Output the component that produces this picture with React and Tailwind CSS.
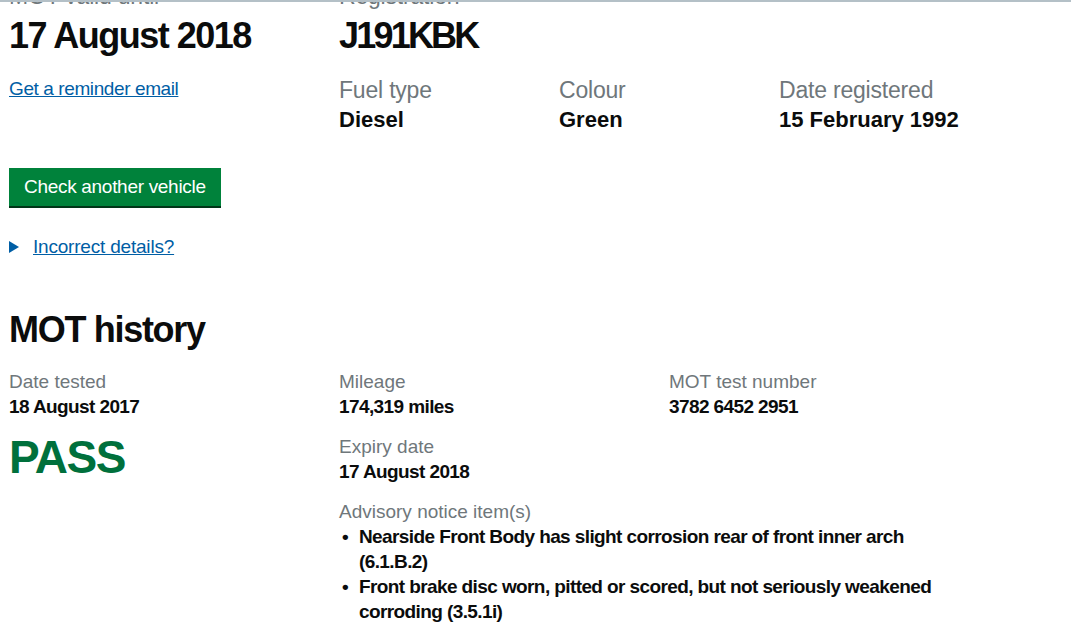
export default function App() {
  const label = "text-[19px] leading-[25px] text-[#6f777b]";
  const value = "text-[19px] leading-[25px] font-bold tracking-[-0.6px]";
  const topLabel = "text-[23px] leading-[30px] text-[#6f777b] tracking-[-0.2px]";
  const topValue = "text-[22px] leading-[30px] font-bold";
  return (
    <div className="min-h-[637px] bg-white font-['Liberation_Sans',Arial,sans-serif] text-[#0b0c0c] border-t-2 border-[#b4c0c7] overflow-hidden">
      <div className="pl-[9px] -mt-[21px]">
        <div className="flex">
          <div className="w-[330px] shrink-0">
            <div className={topLabel}>MOT valid until</div>
            <div className="mt-[5px] text-[36px] leading-[40px] font-bold tracking-[-1.5px]">17 August 2018</div>
            <a href="#" className="mt-5 inline-block text-[19px] leading-[25px] text-[#005ea5] underline tracking-[-0.4px]">Get a reminder email</a>
          </div>
          <div>
            <div className={topLabel}>Registration</div>
            <div className="mt-[5px] text-[36px] leading-[40px] font-bold tracking-[-2.8px]">J191KBK</div>
            <div className="mt-[19px] flex">
              <div className="w-[220px]">
                <div className={topLabel}>Fuel type</div>
                <div className={topValue}>Diesel</div>
              </div>
              <div className="w-[220px]">
                <div className={topLabel}>Colour</div>
                <div className={topValue}>Green</div>
              </div>
              <div className="w-[220px]">
                <div className={topLabel}>Date registered</div>
                <div className={topValue}>15 February 1992</div>
              </div>
            </div>
          </div>
        </div>

        <button className="mt-[33px] h-[38px] px-[15px] bg-[#00823b] text-white text-[19px] tracking-[-0.3px] shadow-[0_2px_0_#003618] flex items-center">
          Check another vehicle
        </button>

        <div className="mt-[28px] flex items-center h-[25px] text-[19px] leading-[25px]">
          <svg width="10" height="12" viewBox="0 0 10 12" className="mr-[14px] shrink-0">
            <polygon points="0,0 10,6 0,12" fill="#005ea5" />
          </svg>
          <a href="#" className="text-[#005ea5] underline tracking-[-0.2px]">Incorrect details?</a>
        </div>

        <h2 className="mt-[51px] text-[36px] leading-[40px] font-bold tracking-[-1.3px]">MOT history</h2>

        <div className="mt-[19px] flex">
          <div className="w-[330px] shrink-0">
            <div className={label}>Date tested</div>
            <div className={value}>18 August 2017</div>
            <div className="mt-[13px] text-[46px] leading-[50px] font-bold tracking-[-1.5px] text-[#00703c]">PASS</div>
          </div>
          <div>
            <div className="flex">
              <div className="w-[330px]">
                <div className={label}>Mileage</div>
                <div className={value}>174,319 miles</div>
                <div className={"mt-[15px] " + label}>Expiry date</div>
                <div className={value}>17 August 2018</div>
              </div>
              <div>
                <div className={label}>MOT test number</div>
                <div className={value}>3782 6452 2951</div>
              </div>
            </div>
            <div className={"mt-[15px] " + label}>Advisory notice item(s)</div>
            <ul className="w-[600px]">
              <li className={"flex " + value}>
                <span className="w-[20px] shrink-0 pl-[3px]">•</span>
                <span>Nearside Front Body has slight corrosion rear of front inner arch (6.1.B.2)</span>
              </li>
              <li className={"flex " + value}>
                <span className="w-[20px] shrink-0 pl-[3px]">•</span>
                <span>Front brake disc worn, pitted or scored, but not seriously weakened corroding (3.5.1i)</span>
              </li>
            </ul>
          </div>
        </div>
      </div>
    </div>
  );
}
